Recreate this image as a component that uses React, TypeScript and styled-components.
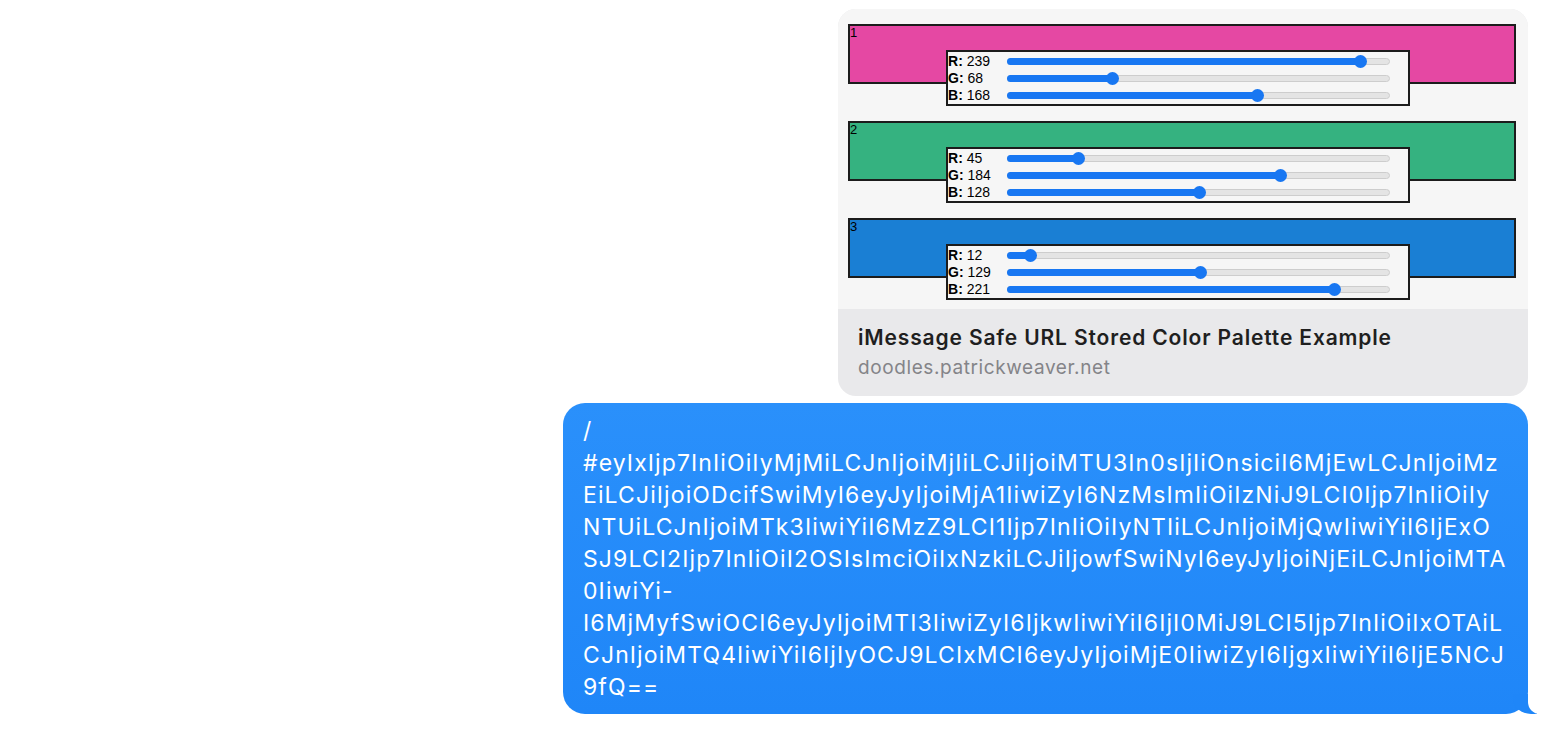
import React from "react";
import styled, { createGlobalStyle } from "styled-components";

const Global = createGlobalStyle`
  html, body { margin: 0; padding: 0; background: #ffffff; }
  body { font-family: Inter, "Liberation Sans", sans-serif; -webkit-font-smoothing: antialiased; }
`;

const Page = styled.div`
  width: 1554px;
  height: 734px;
  overflow: hidden;
  box-sizing: border-box;
  padding: 9px 26px 0 0;
  display: flex;
  flex-direction: column;
  align-items: flex-end;
  gap: 7px;
`;

const LinkCard = styled.div`
  width: 690px;
  border-radius: 18px;
  overflow: hidden;
  background: #e9e9eb;
`;

const Preview = styled.div`
  height: 300px;
  box-sizing: border-box;
  background: #f6f6f6;
  padding: 15px 12px 0 10px;
  display: flex;
  flex-direction: column;
  gap: 37px;
`;

const Swatch = styled.div<{ $bg: string }>`
  height: 60px;
  box-sizing: border-box;
  border: 2px solid #1c1c1c;
  background: ${(p) => p.$bg};
  font-family: "Liberation Sans", Arial, sans-serif;
`;

const SwatchLabel = styled.div`
  font-size: 13px;
  line-height: 14px;
  color: #000;
`;

const Controls = styled.div`
  width: 464px;
  height: 56px;
  box-sizing: border-box;
  margin: 10px 0 0 96px;
  border: 2px solid #1c1c1c;
  background: #f6f6f6;
  padding-top: 1px;
  display: flex;
  flex-direction: column;
`;

const ControlRow = styled.div`
  height: 17px;
  display: grid;
  grid-template-columns: 59px 383px;
  align-items: center;
`;

const ChannelLabel = styled.span`
  font-size: 14px;
  line-height: 17px;
  color: #000;
  white-space: nowrap;
  b { font-weight: 700; }
`;

const Slider = styled.div`
  position: relative;
  height: 13px;
`;

const Track = styled.div`
  position: absolute;
  left: 0;
  right: 0;
  top: 3px;
  height: 7px;
  box-sizing: border-box;
  border-radius: 4px;
  background: #e4e4e4;
  border: 1px solid #cdcdcd;
`;

const Fill = styled.div`
  position: absolute;
  left: 0;
  top: 3px;
  height: 7px;
  border-radius: 4px;
  background: #1877f2;
`;

const Thumb = styled.div`
  position: absolute;
  top: 0;
  width: 13px;
  height: 13px;
  border-radius: 50%;
  background: #1877f2;
`;

const Caption = styled.div`
  height: 87px;
  box-sizing: border-box;
  padding: 17px 20px 0 20px;
`;

const Title = styled.div`
  font-size: 21px;
  line-height: 24px;
  font-weight: 600;
  color: #1f1f1f;
  margin-bottom: 7px;
  letter-spacing: 0.85px;
`;

const Domain = styled.div`
  font-size: 19px;
  line-height: 22px;
  color: #848488;
  letter-spacing: 0.6px;
`;

const Bubble = styled.div`
  position: relative;
  width: 965px;
  box-sizing: border-box;
  padding: 12px 20px 11px 20px;
  border-radius: 22px;
  background: linear-gradient(#2a90fb, #1f86f8);
  color: #ffffff;
  font-size: 23px;
  line-height: 32px;
  letter-spacing: 1.1px;

  &::before {
    content: "";
    position: absolute;
    bottom: 0;
    right: -9px;
    width: 24px;
    height: 20px;
    background: #1f86f8;
    border-bottom-left-radius: 18px 15px;
  }
  &::after {
    content: "";
    position: absolute;
    bottom: 0;
    right: -30px;
    width: 30px;
    height: 20px;
    background: #ffffff;
    border-bottom-left-radius: 12px;
  }
`;

const BubbleLine = styled.div`
  white-space: nowrap;
  position: relative;
  z-index: 1;
`;

type Color = { n: number; r: number; g: number; b: number; bg: string };

const colors: Color[] = [
  { n: 1, r: 239, g: 68, b: 168, bg: "#e548a3" },
  { n: 2, r: 45, g: 184, b: 128, bg: "#35b280" },
  { n: 3, r: 12, g: 129, b: 221, bg: "#1a7fd4" },
];

const SLIDER_W = 383;
const THUMB = 13;

function Channel({ name, value }: { name: string; value: number }) {
  const center = THUMB / 2 + (value / 255) * (SLIDER_W - THUMB);
  return (
    <ControlRow>
      <ChannelLabel>
        <b>{name}:</b> {value}
      </ChannelLabel>
      <Slider>
        <Track />
        <Fill style={{ width: center }} />
        <Thumb style={{ left: center - THUMB / 2 }} />
      </Slider>
    </ControlRow>
  );
}

const lines = [
  "/",
  "#eyIxIjp7InIiOiIyMjMiLCJnIjoiMjIiLCJiIjoiMTU3In0sIjIiOnsiciI6MjEwLCJnIjoiMz",
  "EiLCJiIjoiODcifSwiMyI6eyJyIjoiMjA1IiwiZyI6NzMsImIiOiIzNiJ9LCI0Ijp7InIiOiIy",
  "NTUiLCJnIjoiMTk3IiwiYiI6MzZ9LCI1Ijp7InIiOiIyNTIiLCJnIjoiMjQwIiwiYiI6IjExO",
  "SJ9LCI2Ijp7InIiOiI2OSIsImciOiIxNzkiLCJiIjowfSwiNyI6eyJyIjoiNjEiLCJnIjoiMTA",
  "0IiwiYi-",
  "I6MjMyfSwiOCI6eyJyIjoiMTI3IiwiZyI6IjkwIiwiYiI6IjI0MiJ9LCI5Ijp7InIiOiIxOTAiL",
  "CJnIjoiMTQ4IiwiYiI6IjIyOCJ9LCIxMCI6eyJyIjoiMjE0IiwiZyI6IjgxIiwiYiI6IjE5NCJ",
  "9fQ==",
];

export default function App() {
  return (
    <>
      <Global />
      <Page>
        <LinkCard>
          <Preview>
            {colors.map((c) => (
              <Swatch key={c.n} $bg={c.bg}>
                <SwatchLabel>{c.n}</SwatchLabel>
                <Controls>
                  <Channel name="R" value={c.r} />
                  <Channel name="G" value={c.g} />
                  <Channel name="B" value={c.b} />
                </Controls>
              </Swatch>
            ))}
          </Preview>
          <Caption>
            <Title>iMessage Safe URL Stored Color Palette Example</Title>
            <Domain>doodles.patrickweaver.net</Domain>
          </Caption>
        </LinkCard>
        <Bubble>
          {lines.map((l, i) => (
            <BubbleLine key={i}>{l}</BubbleLine>
          ))}
        </Bubble>
      </Page>
    </>
  );
}
